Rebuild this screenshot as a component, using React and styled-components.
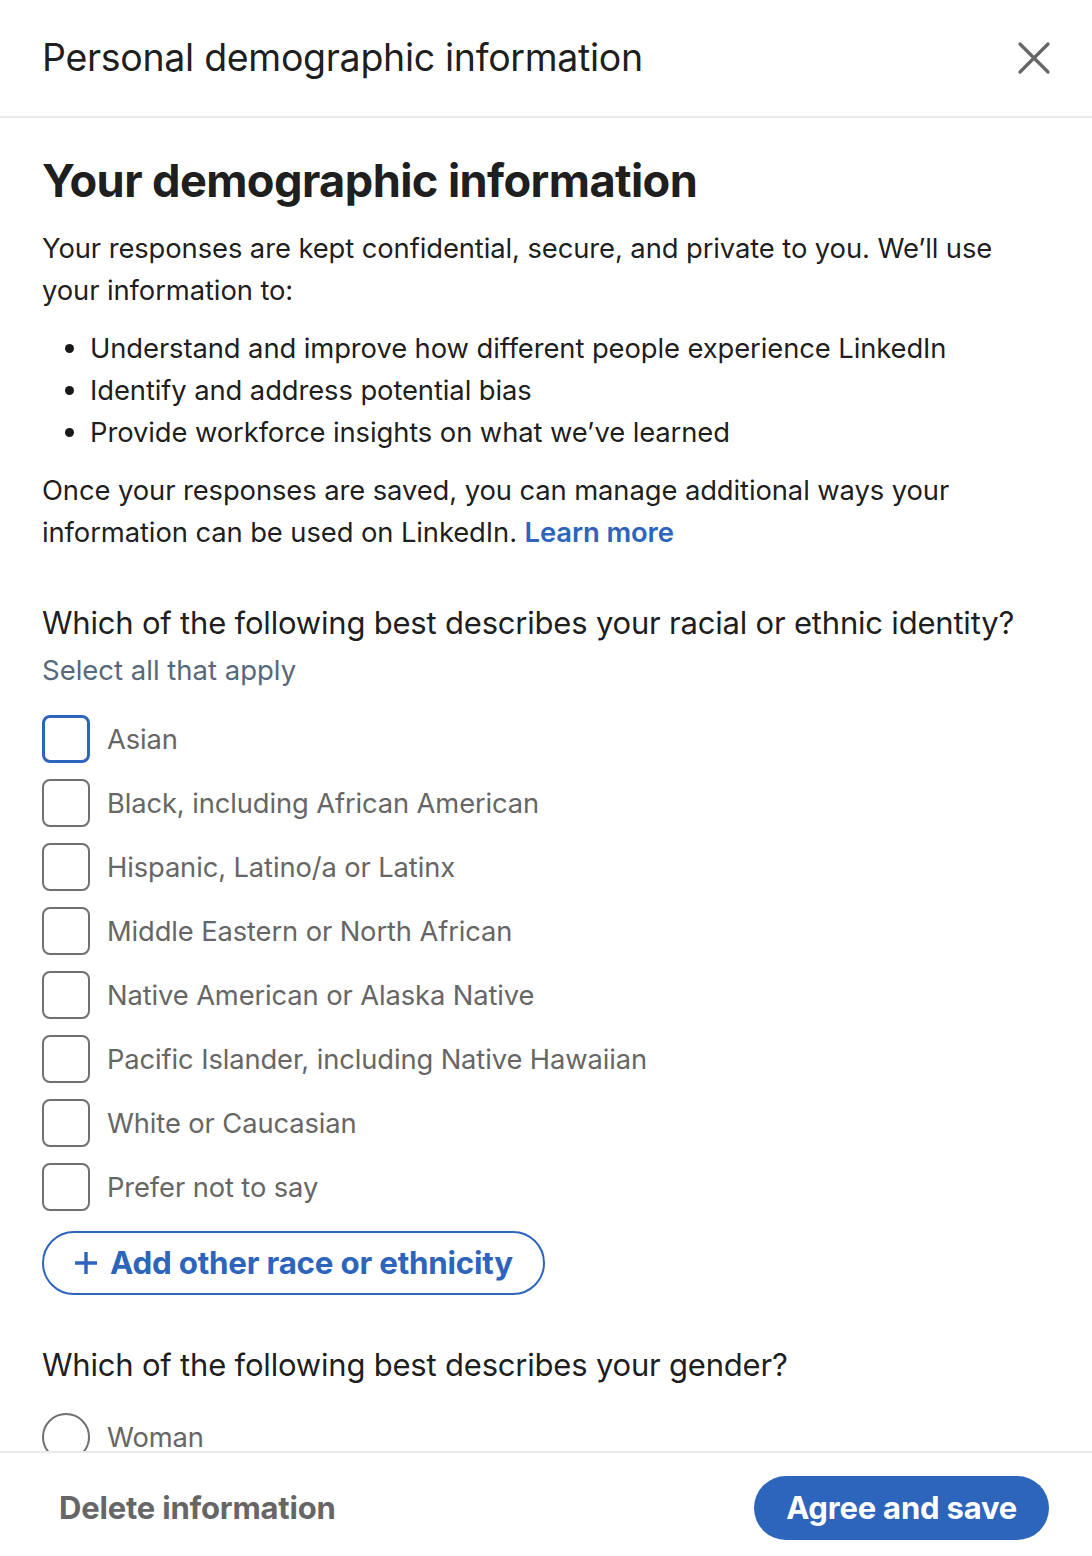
import React from 'react';
import styled, { createGlobalStyle } from 'styled-components';

const GlobalStyle = createGlobalStyle`
    html, body {
        margin: 0;
        padding: 0;
        background: #fff;
    }
    body {
        font-family: Inter, "Noto Sans", "Liberation Sans", sans-serif;
        color: rgba(0, 0, 0, 0.9);
        -webkit-font-smoothing: antialiased;
    }
    * { box-sizing: border-box; }
`;

const BLUE = '#2d64bc';

const Modal = styled.div`
    width: 1092px;
    height: 1556px;
    display: flex;
    flex-direction: column;
    background: #fff;
    overflow: hidden;
`;

const Header = styled.header`
    height: 118px;
    flex-shrink: 0;
    display: flex;
    align-items: center;
    justify-content: space-between;
    padding: 0 42px 1px;
    border-bottom: 2px solid #e9e9e9;
`;

const Title = styled.h1`
    margin: 0;
    font-size: 37.5px;
    font-weight: 400;
    letter-spacing: -0.3px;
    color: rgba(0, 0, 0, 0.9);
`;

const CloseButton = styled.button`
    width: 48px;
    height: 48px;
    margin-right: -8px;
    border: none;
    background: none;
    padding: 0;
    display: flex;
    align-items: center;
    justify-content: center;
    cursor: pointer;
`;

const Body = styled.main`
    flex: 1;
    overflow: hidden;
    padding: 34px 42px 0;
`;

const Heading = styled.h2`
    margin: 0;
    font-size: 45.2px;
    line-height: 58px;
    font-weight: 700;
    letter-spacing: -0.6px;
`;

const Para = styled.p`
    margin: ${props => props.top || 16}px 0 0;
    font-size: 27.4px;
    line-height: 42px;
    letter-spacing: -0.1px;
`;

const Bullets = styled.ul`
    margin: 16px 0 0;
    padding-left: 48px;
    font-size: 27.4px;
    line-height: 42px;
    letter-spacing: -0.1px;
`;

const Link = styled.a`
    color: ${BLUE};
    font-weight: 600;
    text-decoration: none;
`;

const Question = styled.h3`
    margin: 50px 0 0;
    font-size: 31px;
    line-height: 40px;
    font-weight: 400;
    letter-spacing: -0.2px;
`;

const Hint = styled.div`
    font-size: 27.5px;
    line-height: 36px;
    color: #56687a;
    margin-top: 9px;
`;

const Options = styled.div`
    display: flex;
    flex-direction: column;
    gap: 16px;
    margin-top: ${props => props.top}px;
`;

const Option = styled.label`
    display: flex;
    align-items: center;
    gap: 17px;
    height: 48px;
    font-size: 27.3px;
    color: #666;
    letter-spacing: -0.1px;
`;

const Box = styled.span`
    width: 48px;
    height: 48px;
    flex-shrink: 0;
    border: ${props => props.focused ? `3px solid ${BLUE}` : '2px solid #707070'};
    border-radius: ${props => props.round ? '50%' : '8px'};
`;

const AddButton = styled.button`
    margin-top: 20px;
    height: 64px;
    display: inline-flex;
    align-items: center;
    gap: 12px;
    padding: 0 30px 0 30px;
    border: 2px solid ${BLUE};
    border-radius: 32px;
    background: #fff;
    color: ${BLUE};
    font-family: inherit;
    font-size: 31.3px;
    font-weight: 700;
    letter-spacing: -0.2px;
    cursor: pointer;
`;

const Footer = styled.footer`
    height: 105px;
    flex-shrink: 0;
    display: flex;
    align-items: center;
    justify-content: space-between;
    padding: 6px 43px 0 42px;
    border-top: 2px solid #e9e9e9;
`;

const TextButton = styled.button`
    border: none;
    background: none;
    padding: 0 17px;
    font-family: inherit;
    font-size: 31px;
    font-weight: 700;
    color: #666;
    letter-spacing: -0.2px;
    cursor: pointer;
`;

const PrimaryButton = styled.button`
    height: 64px;
    padding: 0 32px;
    border: none;
    border-radius: 32px;
    background: ${BLUE};
    color: #fff;
    font-family: inherit;
    font-size: 31px;
    font-weight: 700;
    letter-spacing: -0.2px;
    cursor: pointer;
`;

const races = [
    'Asian',
    'Black, including African American',
    'Hispanic, Latino/a or Latinx',
    'Middle Eastern or North African',
    'Native American or Alaska Native',
    'Pacific Islander, including Native Hawaiian',
    'White or Caucasian',
    'Prefer not to say',
];

const App = () => {
    return (
        <>
            <GlobalStyle />
            <Modal>
                <Header>
                    <Title>Personal demographic information</Title>
                    <CloseButton aria-label="Dismiss">
                        <svg width="34" height="34" viewBox="0 0 34 34">
                            <path d="M3 3 L31 31 M31 3 L3 31" stroke="#666" strokeWidth="3.2" strokeLinecap="round" />
                        </svg>
                    </CloseButton>
                </Header>
                <Body>
                    <Heading>Your demographic information</Heading>
                    <Para top={17}>
                        Your responses are kept confidential, secure, and private to you. We’ll use your information to:
                    </Para>
                    <Bullets>
                        <li>Understand and improve how different people experience LinkedIn</li>
                        <li>Identify and address potential bias</li>
                        <li>Provide workforce insights on what we’ve learned</li>
                    </Bullets>
                    <Para>
                        Once your responses are saved, you can manage additional ways your information can be used on LinkedIn. <Link href="#">Learn more</Link>
                    </Para>

                    <Question>Which of the following best describes your racial or ethnic identity?</Question>
                    <Hint>Select all that apply</Hint>
                    <Options top={27}>
                        {races.map((race, i) => (
                            <Option key={race}>
                                <Box focused={i === 0} />
                                {race}
                            </Option>
                        ))}
                    </Options>
                    <AddButton>
                        <svg width="24" height="24" viewBox="0 0 24 24">
                            <path d="M12 1 V23 M1 12 H23" stroke={BLUE} strokeWidth="3.4" />
                        </svg>
                        Add other race or ethnicity
                    </AddButton>

                    <Question>Which of the following best describes your gender?</Question>
                    <Options top={28}>
                        <Option>
                            <Box round />
                            Woman
                        </Option>
                    </Options>
                </Body>
                <Footer>
                    <TextButton>Delete information</TextButton>
                    <PrimaryButton>Agree and save</PrimaryButton>
                </Footer>
            </Modal>
        </>
    );
};

export default App;
